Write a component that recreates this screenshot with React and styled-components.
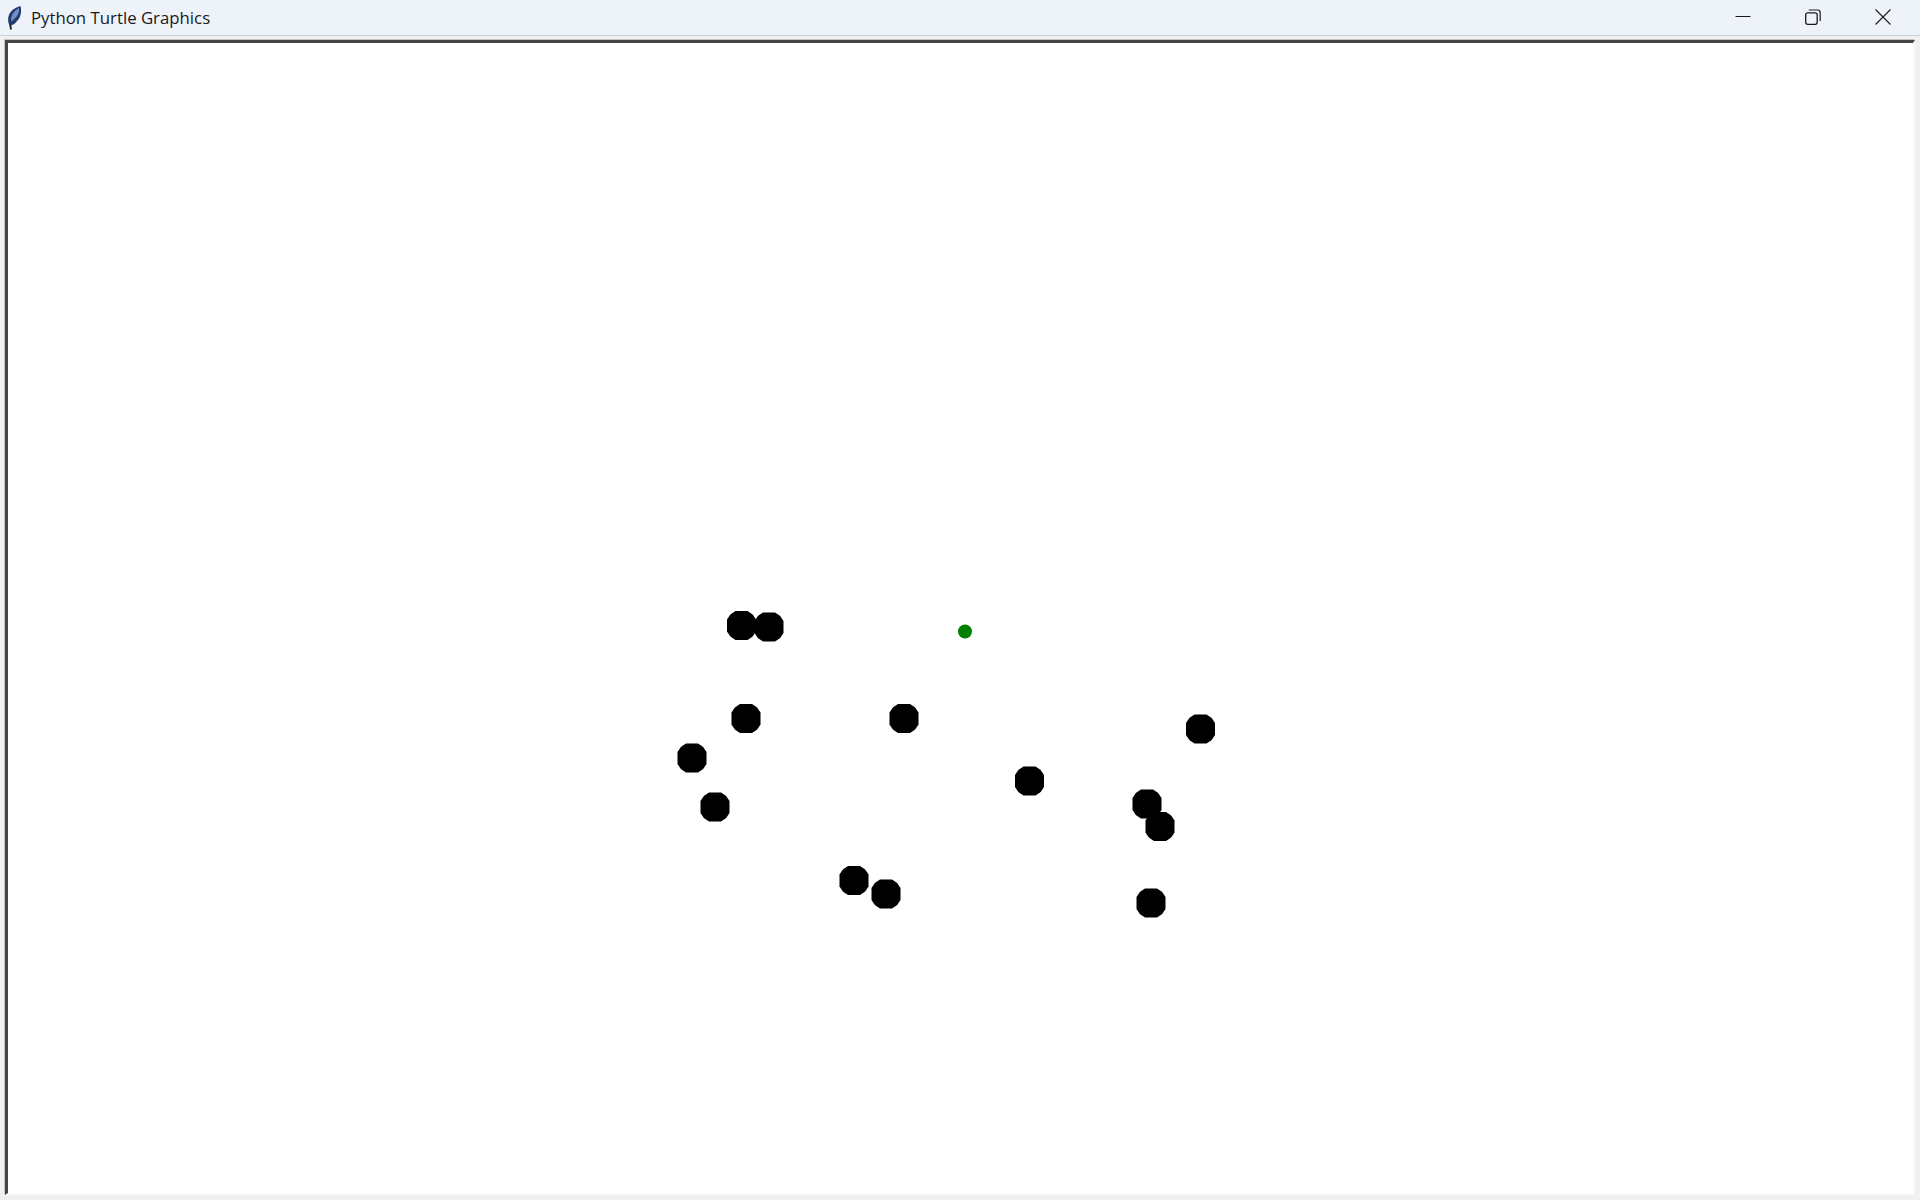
import React from "react";
import styled, { createGlobalStyle } from "styled-components";

const Global = createGlobalStyle`
  html, body {
    margin: 0;
    height: 100%;
    overflow: hidden;
  }
`;

const Win = styled.div`
  width: 1920px;
  height: 1200px;
  display: flex;
  flex-direction: column;
  background: #f0f0f0;
`;

const TitleBar = styled.div`
  height: 35px;
  flex: none;
  display: flex;
  align-items: center;
  background: #eef2f9;
  border-bottom: 1px solid #cfd0d2;
`;

const AppIcon = styled.svg`
  width: 16px;
  height: 24px;
  margin-left: 6px;
  flex: none;
`;

const Caption = styled.span`
  margin-left: 9px;
  flex: 1;
  font-family: "Open Sans", "Noto Sans", sans-serif;
  font-size: 16.8px;
  color: #1a1a1a;
`;

const Controls = styled.div`
  display: flex;
  align-self: flex-start;
  padding-right: 2px;
`;

const Ctrl = styled.div`
  width: 70px;
  height: 33px;
  display: flex;
  align-items: center;
  justify-content: center;
  svg {
    width: 16px;
    height: 16px;
    stroke: #1a1a1a;
    fill: none;
  }
`;

const Body = styled.div`
  flex: 1;
  display: flex;
  min-height: 0;
  padding: 4px 5px 5px 5px;
`;

const Canvas = styled.div`
  flex: 1;
  background: #fff;
  border-style: solid;
  border-width: 3px 2px 2px 3px;
  border-color: #454545 #fafafa #fafafa #454545;
  box-shadow: -1px -1px 0 #c4c4c4;
  svg {
    display: block;
    width: 100%;
    height: 100%;
  }
`;

const dots = [
  [741.5, 625.5],
  [769, 627],
  [746, 718.5],
  [904, 718.5],
  [692, 758],
  [715, 807],
  [1029.5, 781],
  [1200.5, 729],
  [1147, 804],
  [1160, 826.5],
  [1151, 903],
  [854, 880.5],
  [886, 894],
];

const blob =
  "-6,-14.5 6,-14.5 10.5,-11.5 11.5,-10.5 14.5,-6 14.5,6 11.5,10.5 10.5,11.5 6,14.5 -6,14.5 -10.5,11.5 -11.5,10.5 -14.5,6 -14.5,-6 -11.5,-10.5 -10.5,-11.5";

// canvas content starts here on the page
const ox = 8;
const oy = 43;

export default function App() {
  return (
    <Win>
      <Global />
      <TitleBar>
        <AppIcon viewBox="0 0 16 24">
          <path d="M4 17 L5 23.5" stroke="#1c1c1c" strokeWidth="1.8" fill="none" />
          <path
            d="M3.5 19.5 C0 12 3 3 14.5 0 C16 6 14.5 12 11 15 C8.5 18.5 6 19.5 3.5 19.5 Z"
            fill="#22396a"
          />
          <path d="M5 15.5 C4.5 10 7.5 5 13 2 C13.5 7 11 12 5 15.5 Z" fill="#6f90c8" />
        </AppIcon>
        <Caption>Python Turtle Graphics</Caption>
        <Controls>
          <Ctrl>
            <svg viewBox="0 0 16 16">
              <path d="M0.5 7.5 H15.5" strokeWidth="1" />
            </svg>
          </Ctrl>
          <Ctrl>
            <svg viewBox="0 0 16 16">
              <rect x="0.7" y="3.8" width="11.5" height="11.5" rx="2" strokeWidth="1.3" />
              <path d="M3.8 1 H12.5 A2.7 2.7 0 0 1 15.2 3.7 V12" strokeWidth="1.2" />
            </svg>
          </Ctrl>
          <Ctrl>
            <svg viewBox="0 0 16 16">
              <path d="M0.5 0.5 L15.5 15.5 M15.5 0.5 L0.5 15.5" strokeWidth="1.1" />
            </svg>
          </Ctrl>
        </Controls>
      </TitleBar>
      <Body>
        <Canvas>
          <svg>
            {dots.map(([x, y]) => (
              <polygon
                key={x}
                points={blob}
                fill="#000"
                transform={`translate(${x - ox} ${y - oy})`}
              />
            ))}
            <circle cx={965 - ox} cy={631.5 - oy} r="7" fill="#008000" />
          </svg>
        </Canvas>
      </Body>
    </Win>
  );
}
